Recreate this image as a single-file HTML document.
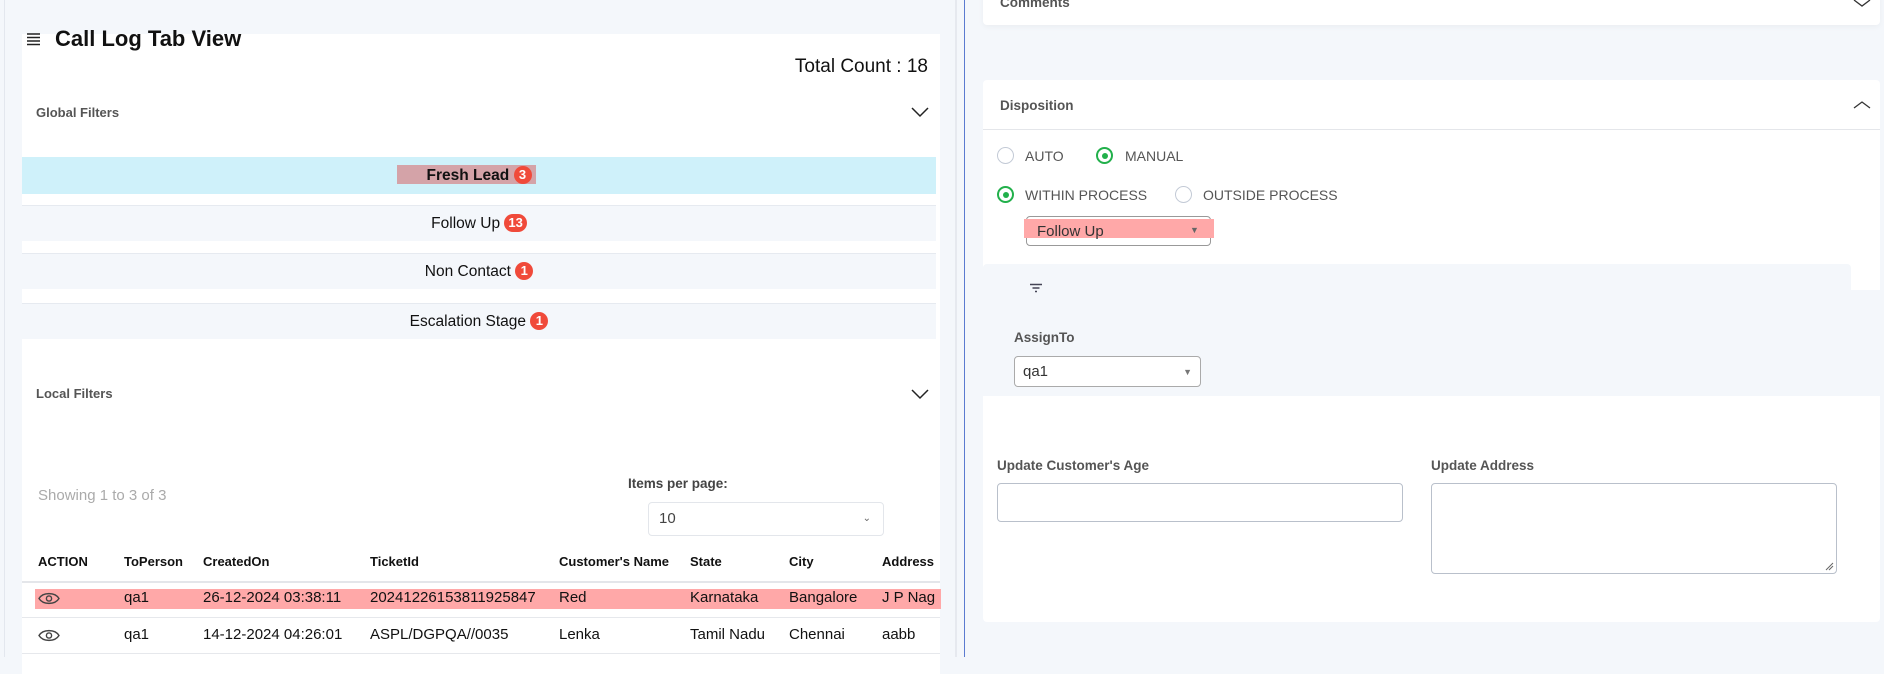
<!DOCTYPE html>
<html><head><meta charset="utf-8"><style>
*{box-sizing:border-box;margin:0;padding:0}
body{width:1884px;height:657px;overflow:hidden;background:#f4f7fb;font-family:"Liberation Sans",sans-serif;color:#111;position:relative}
.a{position:absolute;white-space:nowrap}
.row{position:absolute;left:22px;width:914px;height:36px;background:#f4f7fb;border-top:1px solid #e6eaf0;text-align:center;font-size:15.5px;line-height:36px}
.badge{display:inline-block;background:#f04a3a;color:#fff;border-radius:9px;font-size:13px;font-weight:bold;line-height:18px;padding:0 4px;min-width:18px;vertical-align:1px}
.th{position:absolute;top:554px;font-size:13px;font-weight:bold}
.td{position:absolute;font-size:15px}
.lbl{font-size:13.5px;font-weight:bold;color:#555}
.radio{position:absolute;width:17px;height:17px;border-radius:50%;border:1.5px solid #c3cad6;background:#fff}
.radio.on{border:2px solid #22b04b}
.radio.on:after{content:"";position:absolute;left:3.5px;top:3.5px;width:6px;height:6px;border-radius:50%;background:#22b04b}
.rl{position:absolute;font-size:14px;color:#555}
</style></head><body>
<div class="a" style="left:4px;top:0;width:1px;height:657px;background:#e3e7ee"></div>
<div class="a" style="left:955px;top:0;width:2px;height:657px;background:#e6e9ef"></div>
<div class="a" style="left:964px;top:0;width:1px;height:657px;background:#5b7bd0"></div>

<!-- left card -->
<div class="a" style="left:22px;top:34px;width:918px;height:640px;background:#fff"></div>
<svg class="a" style="left:27px;top:33px" width="14" height="13"><path d="M0 1H13M0 4.5H13M0 8H13M0 11.5H13" stroke="#222" stroke-width="1.6"/></svg>
<div class="a" style="left:55px;top:26px;font-size:22px;font-weight:bold">Call Log Tab View</div>
<div class="a" style="right:956px;top:56px;font-size:19px">Total Count : 18</div>
<div class="a lbl" style="left:36px;top:105px;font-size:13px">Global Filters</div>
<svg class="a" style="left:910px;top:106px" width="20" height="12"><path d="M2 2 L10 10 L18 2" fill="none" stroke="#222" stroke-width="1.5"/></svg>

<div class="row" style="top:157px;height:37px;background:#cff1fa;border:none"></div>
<div class="a" style="left:397px;top:165px;width:139px;height:19px;background:#d4a3a8"></div>
<div class="a" style="left:22px;top:157px;width:914px;text-align:center;font-size:15.5px;font-weight:bold;line-height:37px">Fresh Lead <span class="badge">3</span></div>
<div class="row" style="top:205px">Follow Up <span class="badge">13</span></div>
<div class="row" style="top:253px">Non Contact <span class="badge">1</span></div>
<div class="row" style="top:303px">Escalation Stage <span class="badge">1</span></div>

<div class="a lbl" style="left:36px;top:386px;font-size:13px">Local Filters</div>
<svg class="a" style="left:910px;top:388px" width="20" height="12"><path d="M2 2 L10 10 L18 2" fill="none" stroke="#222" stroke-width="1.5"/></svg>

<div class="a" style="left:38px;top:487px;font-size:15px;color:#aaa">Showing 1 to 3 of 3</div>
<div class="a" style="left:628px;top:476px;font-size:13.5px;font-weight:bold;color:#444">Items per page:</div>
<div class="a" style="left:648px;top:502px;width:236px;height:34px;border:1px solid #e3e6eb;border-radius:4px;font-size:15px;line-height:32px;padding-left:10px;color:#444">10<span style="position:absolute;right:12px;top:0;font-size:10px;color:#666">&#8964;</span></div>

<div class="th" style="left:38px">ACTION</div>
<div class="th" style="left:124px">ToPerson</div>
<div class="th" style="left:203px">CreatedOn</div>
<div class="th" style="left:370px">TicketId</div>
<div class="th" style="left:559px">Customer's Name</div>
<div class="th" style="left:690px">State</div>
<div class="th" style="left:789px">City</div>
<div class="th" style="left:882px">Address</div>
<div class="a" style="left:22px;top:581px;width:918px;height:2px;background:#e4e6ea"></div>
<div class="a" style="left:35px;top:589px;width:906px;height:20px;background:#ffa8a8"></div>
<div class="a" style="left:22px;top:617px;width:918px;height:1px;background:#e6e8ec"></div>
<div class="a" style="left:22px;top:653px;width:918px;height:1px;background:#e6e8ec"></div>
<svg class="a" style="left:38px;top:591px" width="22" height="15"><path d="M1 7.5 C5 1,17 1,21 7.5 C17 14,5 14,1 7.5Z" fill="none" stroke="#444" stroke-width="1.4"/><circle cx="11" cy="7.5" r="2.6" fill="none" stroke="#444" stroke-width="1.4"/></svg>
<svg class="a" style="left:38px;top:628px" width="22" height="15"><path d="M1 7.5 C5 1,17 1,21 7.5 C17 14,5 14,1 7.5Z" fill="none" stroke="#444" stroke-width="1.4"/><circle cx="11" cy="7.5" r="2.6" fill="none" stroke="#444" stroke-width="1.4"/></svg>
<div class="td" style="left:124px;top:589px">qa1</div>
<div class="td" style="left:203px;top:589px">26-12-2024 03:38:11</div>
<div class="td" style="left:370px;top:589px">20241226153811925847</div>
<div class="td" style="left:559px;top:589px">Red</div>
<div class="td" style="left:690px;top:589px">Karnataka</div>
<div class="td" style="left:789px;top:589px">Bangalore</div>
<div class="td" style="left:882px;top:589px">J P Nag</div>
<div class="td" style="left:124px;top:626px">qa1</div>
<div class="td" style="left:203px;top:626px">14-12-2024 04:26:01</div>
<div class="td" style="left:370px;top:626px">ASPL/DGPQA//0035</div>
<div class="td" style="left:559px;top:626px">Lenka</div>
<div class="td" style="left:690px;top:626px">Tamil Nadu</div>
<div class="td" style="left:789px;top:626px">Chennai</div>
<div class="td" style="left:882px;top:626px">aabb</div>

<!-- right -->
<div class="a" style="left:983px;top:-10px;width:897px;height:35px;background:#fff;border-radius:4px;box-shadow:0 2px 6px rgba(0,0,0,.04)"></div>
<div class="a lbl" style="left:1000px;top:-5px">Comments</div>
<svg class="a" style="left:1852px;top:0" width="20" height="8"><path d="M2 0 L10 6 L18 0" fill="none" stroke="#333" stroke-width="1.3"/></svg>

<div class="a" style="left:983px;top:80px;width:897px;height:542px;background:#fff;border-radius:4px"></div>
<div class="a lbl" style="left:1000px;top:98px">Disposition</div>
<svg class="a" style="left:1852px;top:100px" width="20" height="10"><path d="M2 8 L10 2 L18 8" fill="none" stroke="#333" stroke-width="1.3"/></svg>
<div class="a" style="left:983px;top:129px;width:897px;height:1px;background:#e4e6ea"></div>

<div class="radio" style="left:997px;top:147px"></div><div class="rl" style="left:1025px;top:148px">AUTO</div>
<div class="radio on" style="left:1096px;top:147px"></div><div class="rl" style="left:1125px;top:148px">MANUAL</div>
<div class="radio on" style="left:997px;top:186px"></div><div class="rl" style="left:1025px;top:187px">WITHIN PROCESS</div>
<div class="radio" style="left:1175px;top:186px"></div><div class="rl" style="left:1203px;top:187px">OUTSIDE PROCESS</div>

<div class="a" style="left:1026px;top:216px;width:185px;height:30px;border:1px solid #999;border-radius:4px"></div>
<div class="a" style="left:1024px;top:219px;width:190px;height:19px;background:#ffa8a8"></div>
<div class="a" style="left:1037px;top:223px;font-size:15px;color:#333">Follow Up</div>
<div class="a" style="left:1190px;top:225px;font-size:9px;color:#666">&#9660;</div>

<div class="a" style="left:983px;top:264px;width:868px;height:30px;background:#f4f7fb;border-radius:4px"></div>
<div class="a" style="left:983px;top:290px;width:897px;height:106px;background:#f4f7fb"></div>
<svg class="a" style="left:1029px;top:283px" width="14" height="11"><path d="M1 1.5H13M3.5 5H10.5M6 8.5H8" stroke="#445" stroke-width="1.5"/></svg>
<div class="a lbl" style="left:1014px;top:330px;font-weight:bold">AssignTo</div>
<div class="a" style="left:1014px;top:356px;width:187px;height:31px;background:#fff;border:1px solid #aaa;border-radius:4px;font-size:15px;line-height:29px;padding-left:8px;color:#333">qa1<span style="position:absolute;right:8px;top:1px;font-size:9px;color:#777">&#9660;</span></div>

<div class="a lbl" style="left:997px;top:458px">Update Customer's Age</div>
<div class="a" style="left:997px;top:483px;width:406px;height:39px;border:1px solid #b9c0cb;border-radius:4px"></div>
<div class="a lbl" style="left:1431px;top:458px">Update Address</div>
<div class="a" style="left:1431px;top:483px;width:406px;height:91px;border:1px solid #b9c0cb;border-radius:4px"></div>
<svg class="a" style="left:1825px;top:562px" width="9" height="9"><path d="M1 8L8 1M4 8L8 4" stroke="#666" stroke-width="1"/></svg>
</body></html>
